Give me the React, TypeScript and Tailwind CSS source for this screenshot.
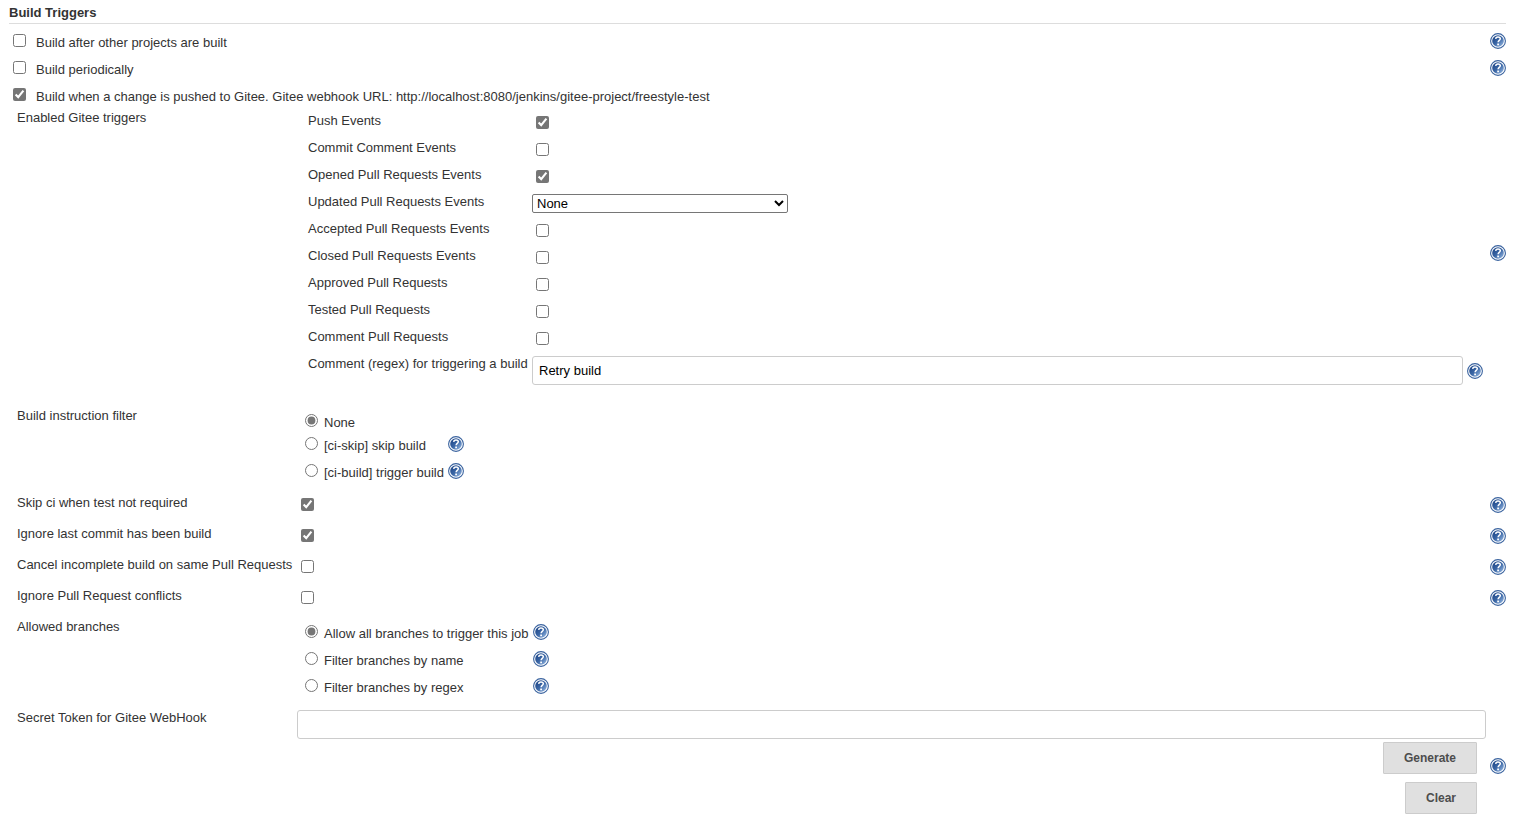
import { useState } from "react";
import type { ReactNode } from "react";

interface RadioOption {
  value: string;
  label: string;
  help: boolean;
}

const pullRequestTriggers = [
  { id: "accepted", label: "Accepted Pull Requests Events" },
  { id: "closed", label: "Closed Pull Requests Events" },
  { id: "approved", label: "Approved Pull Requests" },
  { id: "tested", label: "Tested Pull Requests" },
  { id: "comment", label: "Comment Pull Requests" },
];

const buildFilters: RadioOption[] = [
  { value: "none", label: "None", help: false },
  { value: "ci-skip", label: "[ci-skip] skip build", help: true },
  { value: "ci-build", label: "[ci-build] trigger build", help: true },
];

const branchFilters: RadioOption[] = [
  { value: "all", label: "Allow all branches to trigger this job", help: true },
  { value: "name", label: "Filter branches by name", help: true },
  { value: "regex", label: "Filter branches by regex", help: true },
];

const jobOptions = [
  { id: "skip-ci", label: "Skip ci when test not required", checked: true },
  { id: "ignore-last", label: "Ignore last commit has been build", checked: true },
  { id: "cancel-incomplete", label: "Cancel incomplete build on same Pull Requests", checked: false },
  { id: "ignore-conflicts", label: "Ignore Pull Request conflicts", checked: false },
];

function HelpIcon() {
  return (
    <a href="#help" aria-label="Help" className="block size-4 shrink-0">
      <svg viewBox="0 0 16 16" className="size-4">
        <defs>
          <linearGradient id="helpFill" x1="0.1" y1="0.1" x2="0.9" y2="0.9">
            <stop offset="0" stopColor="#1f4788" />
            <stop offset="0.5" stopColor="#3a66a5" />
            <stop offset="1" stopColor="#8db0dc" />
          </linearGradient>
        </defs>
        <circle cx="8" cy="8" r="7.4" fill="#ffffff" stroke="#3a639f" strokeWidth="1.1" />
        <circle cx="8" cy="8" r="5.8" fill="url(#helpFill)" />
        <path
          d="M5.7 5.9C5.8 4.5 6.7 3.9 8 3.9c1.4 0 2.3.7 2.3 1.9 0 1.6-2.2 1.7-2.2 3.5"
          fill="none"
          stroke="#ffffff"
          strokeWidth="1.5"
        />
        <rect x="7.2" y="10.5" width="1.8" height="1.8" rx="0.3" fill="#ffffff" />
      </svg>
    </a>
  );
}

function Checkbox({ id, checked = false }: { id: string; checked?: boolean }) {
  return <input type="checkbox" id={id} defaultChecked={checked} className="block size-[13px] shrink-0 accent-[#767676]" />;
}

// Top level trigger: checkbox, text and help at the far right
function TriggerRow({ id, label, checked, help }: { id: string; label: string; checked?: boolean; help?: boolean }) {
  return (
    <div className={help ? "flex h-[27px] items-start pl-1" : "flex h-[22px] items-start pl-1"}>
      <div className="pt-1.5">
        <Checkbox id={id} checked={checked} />
      </div>
      <label htmlFor={id} className="flex-1 pt-[5px] pl-2.5">
        {label}
      </label>
      {help && (
        <div className="pt-[5px]">
          <HelpIcon />
        </div>
      )}
    </div>
  );
}

// Setting row: name | control | help
function SettingRow({ name, htmlFor, help, children }: { name: string; htmlFor?: string; help?: boolean; children: ReactNode }) {
  return (
    <div className="grid grid-cols-[280px_1fr_20px] pl-2">
      {htmlFor ? (
        <label htmlFor={htmlFor} className="self-start pt-1">
          {name}
        </label>
      ) : (
        <div className="pt-1">{name}</div>
      )}
      <div>{children}</div>
      <div className="self-center justify-self-end">{help && <HelpIcon />}</div>
    </div>
  );
}

function EventRow({ id, label, children }: { id: string; label: string; children: ReactNode }) {
  return (
    <div className="grid min-h-[27px] grid-cols-[224px_1fr]">
      <label htmlFor={id} className="pt-0.5">
        {label}
      </label>
      {children}
    </div>
  );
}

function EventCheckbox({ id, label, checked }: { id: string; label: string; checked?: boolean }) {
  return (
    <EventRow id={id} label={label}>
      <div className="self-center pl-1">
        <Checkbox id={id} checked={checked} />
      </div>
    </EventRow>
  );
}

function RadioGroup({ name, options }: { name: string; options: RadioOption[] }) {
  const [selected, setSelected] = useState(options[0].value);

  return (
    <div className="inline-block pt-1.5 pb-1 pl-2">
      {options.map((option) => (
        <div key={option.value} className={option.help ? "flex h-[27px] items-start" : "flex h-[23px] items-start"}>
          <div className="pt-1.5">
            <input
              type="radio"
              id={`${name}-${option.value}`}
              name={name}
              checked={selected === option.value}
              onChange={() => setSelected(option.value)}
              className="block size-[13px] accent-[#767676]"
            />
          </div>
          <label htmlFor={`${name}-${option.value}`} className="flex-1 pt-[5px] pr-1 pl-1.5">
            {option.label}
          </label>
          {option.help && (
            <div className="pt-[5px]">
              <HelpIcon />
            </div>
          )}
        </div>
      ))}
    </div>
  );
}

export default function App() {
  const [token, setToken] = useState("");

  const generateToken = () => {
    setToken(Math.random().toString(16).slice(2));
  };

  return (
    <div className="min-h-screen bg-white pr-[18px] pl-[9px] font-['Liberation_Sans',Arial,sans-serif] text-[13px] leading-5 text-[#333333]">
      <h2 className="mb-1 border-b border-[#dddddd] pt-[3px] font-bold">Build Triggers</h2>

      <TriggerRow id="after-projects" label="Build after other projects are built" help />
      <TriggerRow id="periodically" label="Build periodically" help />
      <TriggerRow
        id="gitee-push"
        label="Build when a change is pushed to Gitee. Gitee webhook URL: http://localhost:8080/jenkins/gitee-project/freestyle-test"
        checked
      />

      {/* Gitee triggers */}
      <SettingRow name="Enabled Gitee triggers" help>
        <div className="pt-[5px] pr-[3px] pb-[13px] pl-[11px]">
          <EventCheckbox id="push" label="Push Events" checked />
          <EventCheckbox id="commit-comment" label="Commit Comment Events" />
          <EventCheckbox id="opened" label="Opened Pull Requests Events" checked />
          <EventRow id="updated" label="Updated Pull Requests Events">
            <select id="updated" className="h-[19px] w-64 appearance-auto self-center rounded-[2px] border border-[#767676] bg-white text-black">
              <option>None</option>
              <option>Source Branch updated</option>
              <option>Target Branch updated</option>
              <option>Both Source and Target Branch updated</option>
            </select>
          </EventRow>
          {pullRequestTriggers.map((trigger) => (
            <EventCheckbox key={trigger.id} id={trigger.id} label={trigger.label} />
          ))}
          <EventRow id="comment-regex" label="Comment (regex) for triggering a build">
            <div className="flex items-center gap-1 py-1">
              <input
                type="text"
                id="comment-regex"
                defaultValue="Retry build"
                className="h-[29px] min-w-0 flex-1 rounded-[3px] border border-[#cccccc] px-1.5 text-black"
              />
              <HelpIcon />
            </div>
          </EventRow>
        </div>
      </SettingRow>

      <SettingRow name="Build instruction filter">
        <RadioGroup name="build-filter" options={buildFilters} />
      </SettingRow>

      {jobOptions.map((option) => (
        <SettingRow key={option.id} name={option.label} htmlFor={option.id} help>
          <div className="flex h-[31px] items-center pl-1">
            <Checkbox id={option.id} checked={option.checked} />
          </div>
        </SettingRow>
      ))}

      <SettingRow name="Allowed branches">
        <RadioGroup name="branch-filter" options={branchFilters} />
      </SettingRow>

      {/* Secret token */}
      <SettingRow name="Secret Token for Gitee WebHook" htmlFor="secret-token" help>
        <div className="pt-1.5 pb-3.5">
          <input
            type="text"
            id="secret-token"
            value={token}
            onChange={(e) => setToken(e.target.value)}
            className="block h-[29px] w-full rounded-[3px] border border-[#cccccc] px-1.5 text-black"
          />
          <div className="flex flex-col items-end gap-2 pt-[3px] pr-[9px] text-xs font-bold text-[#4d4d4d]">
            <button type="button" onClick={generateToken} className="h-8 rounded-[1px] border border-[#cccccc] bg-[#e0e0e0] px-5">
              Generate
            </button>
            <button type="button" onClick={() => setToken("")} className="h-8 rounded-[1px] border border-[#cccccc] bg-[#e0e0e0] px-5">
              Clear
            </button>
          </div>
        </div>
      </SettingRow>
    </div>
  );
}
